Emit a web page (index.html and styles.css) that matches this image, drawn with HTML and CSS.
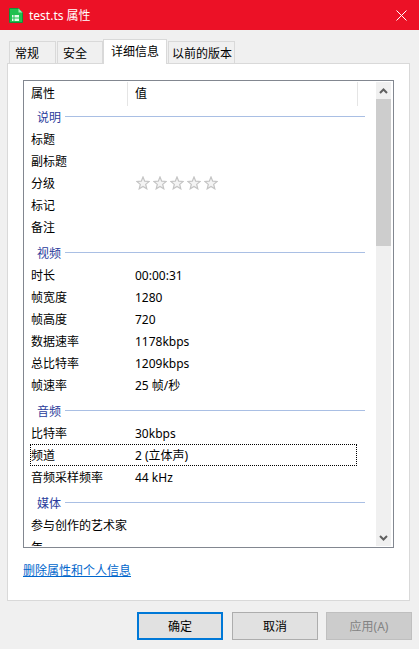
FILE: index.html
```html
<!DOCTYPE html>
<html lang="zh-CN">
<head>
<meta charset="utf-8">
<title>test.ts 属性</title>
<link rel="stylesheet" href="styles.css">
</head>
<body>
<div class="window">
  <header class="titlebar">
    <svg class="app-icon" viewBox="0 0 14 15" width="14" height="15">
      <path d="M.5.5h9l4 4v10H.500z" fill="#21c14f" stroke="#12903a"/>
      <path d="M9.500.5l4 4h-4z" fill="#a5e8b6"/>
      <rect x="3" y="7" width="7" height="6" fill="#e6fbea"/>
      <path d="M5 3v10M3 10h7" stroke="#21c14f" stroke-width="1"/>
    </svg>
    <span class="title">test.ts 属性</span>
    <svg class="close" viewBox="0 0 11 11" width="11" height="11">
      <path d="M.5.5l10 10M10.500.5l-10 10" stroke="#fff" stroke-width="1" fill="none"/>
    </svg>
  </header>
  <nav class="tabs">
    <div class="tab t1">常规</div>
    <div class="tab t2">安全</div>
    <div class="tab t3 active">详细信息</div>
    <div class="tab t4">以前的版本</div>
  </nav>
  <main class="panel">
    <div class="listbox">
      <div class="list">
        <div class="head">
          <span class="hname">属性</span>
          <span class="hval">值</span>
        </div>
        <div class="group"><span>说明</span><i></i></div>
        <div class="row"><span class="n">标题</span></div>
        <div class="row"><span class="n">副标题</span></div>
        <div class="row"><span class="n">分级</span>
          <span class="stars">
            <svg viewBox="0 0 14 14" width="14" height="14"><path class="star" d="M7 1l1.700 4.200 4.500.300-3.500 2.900 1.100 4.400L7 10.400l-3.800 2.400 1.100-4.400L.8 5.500l4.500-.300z"/></svg>
            <svg viewBox="0 0 14 14" width="14" height="14"><path class="star" d="M7 1l1.700 4.200 4.500.300-3.500 2.900 1.100 4.400L7 10.400l-3.800 2.400 1.100-4.400L.8 5.500l4.500-.300z"/></svg>
            <svg viewBox="0 0 14 14" width="14" height="14"><path class="star" d="M7 1l1.700 4.200 4.500.300-3.500 2.900 1.100 4.400L7 10.400l-3.800 2.400 1.100-4.400L.8 5.500l4.500-.300z"/></svg>
            <svg viewBox="0 0 14 14" width="14" height="14"><path class="star" d="M7 1l1.700 4.200 4.500.300-3.500 2.900 1.100 4.400L7 10.400l-3.800 2.400 1.100-4.400L.8 5.500l4.500-.300z"/></svg>
            <svg viewBox="0 0 14 14" width="14" height="14"><path class="star" d="M7 1l1.700 4.200 4.500.300-3.500 2.900 1.100 4.400L7 10.400l-3.800 2.400 1.100-4.400L.8 5.500l4.500-.300z"/></svg>
          </span>
        </div>
        <div class="row"><span class="n">标记</span></div>
        <div class="row"><span class="n">备注</span></div>
        <div class="group"><span>视频</span><i></i></div>
        <div class="row"><span class="n">时长</span><span class="v">00:00:31</span></div>
        <div class="row"><span class="n">帧宽度</span><span class="v">1280</span></div>
        <div class="row"><span class="n">帧高度</span><span class="v">720</span></div>
        <div class="row"><span class="n">数据速率</span><span class="v">1178kbps</span></div>
        <div class="row"><span class="n">总比特率</span><span class="v">1209kbps</span></div>
        <div class="row"><span class="n">帧速率</span><span class="v">25 帧/秒</span></div>
        <div class="group"><span>音频</span><i></i></div>
        <div class="row"><span class="n">比特率</span><span class="v">30kbps</span></div>
        <div class="row focus"><span class="n">频道</span><span class="v">2 (立体声)</span></div>
        <div class="row"><span class="n">音频采样频率</span><span class="v">44 kHz</span></div>
        <div class="group"><span>媒体</span><i></i></div>
        <div class="row"><span class="n">参与创作的艺术家</span></div>
        <div class="row"><span class="n">年</span></div>
      </div>
      <div class="scrollbar">
        <div class="arrow"><svg viewBox="0 0 9 6" width="9" height="6"><path d="M1 5l3.500-3.500L8 5" fill="none" stroke="#606060" stroke-width="2"/></svg></div>
        <div class="thumb"></div>
        <div class="track"></div>
        <div class="arrow"><svg viewBox="0 0 9 6" width="9" height="6"><path d="M1 1l3.500 3.500L8 1" fill="none" stroke="#606060" stroke-width="2"/></svg></div>
      </div>
    </div>
    <a class="link" href="#">删除属性和个人信息</a>
  </main>
  <footer class="buttons">
    <button class="btn primary">确定</button>
    <button class="btn">取消</button>
    <button class="btn disabled">应用(A)</button>
  </footer>
</div>
</body>
</html>
```
FILE: styles.css
```css
* { box-sizing: border-box; }
html, body { margin: 0; padding: 0; }
body {
  width: 419px;
  height: 649px;
  overflow: hidden;
  background: #f0f0f0;
  font-family: "Noto Sans", "Noto Sans CJK SC", sans-serif;
  font-size: 12px;
  color: #000;
}
.window { display: flex; flex-direction: column; height: 649px; }
.titlebar {
  height: 30px;
  flex: none;
  background: #ec1126;
  color: #fff;
  display: flex;
  align-items: center;
  padding: 0 11px 0 9px;
}
.app-icon { flex: none; }
.title { margin-left: 6px; font-size: 12px; flex: 1; }
.close { flex: none; margin-right: 1px; }
.tabs {
  height: 33px;
  flex: none;
  display: flex;
  align-items: flex-end;
  padding-left: 9px;
  position: relative;
  z-index: 1;
}
.tab {
  height: 22px;
  background: #f0f0f0;
  border: 1px solid #d9d9d9;
  border-bottom: none;
  display: flex;
  align-items: center;
  font-size: 12px;
  margin-right: 1px;
  white-space: nowrap;
}
.t1 { width: 47px; padding-left: 5px; }
.t2 { width: 46px; padding-left: 5px; margin-right: 0; }
.t3 { width: 64px; padding-left: 7px; }
.t4 { width: 67px; padding-left: 3px; }
.tab.active {
  height: 25px;
  background: #fff;
  margin-bottom: -1px;
  padding-bottom: 2px;
}
.panel {
  width: 403px;
  height: 538px;
  margin-left: 7px;
  flex: none;
  background: #fff;
  border: 1px solid #d9d9d9;
  padding: 16px 16px 0 15px;
}
.listbox {
  width: 371px;
  height: 468px;
  border: 1px solid #828790;
  display: flex;
  padding: 1px 2px 1px 0;
}
.list { flex: 1; overflow: hidden; min-width: 0; }
.head {
  height: 24px;
  margin-bottom: -4px;
  display: flex;
  align-items: center;
  padding-left: 7px;
}
.hname { width: 97px; height: 24px; line-height: 23px; border-right: 1px solid #e5e5e5; }
.hval { width: 230px; height: 24px; line-height: 23px; padding-left: 7px; border-right: 1px solid #e5e5e5; }
.group {
  height: 26px;
  display: flex;
  align-items: center;
  padding: 3px 11px 0 13px;
  color: #2a3c9c;
}
.group span { flex: none; }
.group i { flex: 1; height: 1px; background: #a9bfe4; margin-left: 4px; }
.row {
  height: 22px;
  display: flex;
  align-items: center;
  padding-left: 7px;
}
.n { width: 104px; flex: none; white-space: nowrap; }
.v { white-space: nowrap; }
.stars { display: flex; gap: 3px; margin-left: 1px; }
.star { fill: #f4f4f4; stroke: #c4c4c4; stroke-width: 1.2; }
.focus { outline: 1px dotted #000; outline-offset: -1px; margin: 0 19px 0 6px; padding-left: 1px; }
.scrollbar {
  width: 15px;
  flex: none;
  display: flex;
  flex-direction: column;
  background: #f0f0f0;
}
.arrow { height: 17px; flex: none; display: flex; align-items: center; justify-content: center; }
.thumb { height: 147px; flex: none; background: #cdcdcd; }
.track { flex: 1; }
.link {
  display: block;
  margin-top: 14px;
  color: #0066cc;
  text-decoration: underline;
  line-height: 17px;
  width: max-content;
}
.buttons {
  flex: 1;
  display: flex;
  gap: 9px;
  padding: 11px 0 0 137px;
}
.btn {
  width: 86px;
  height: 28px;
  flex: none;
  background: #e1e1e1;
  border: 1px solid #adadad;
  font-family: inherit;
  font-size: 12px;
  color: #000;
  padding: 0;
}
.btn.primary { border: 2px solid #0078d7; }
.btn.disabled { background: #cccccc; border-color: #bfbfbf; color: #838383; margin-left: -1px; }
```
